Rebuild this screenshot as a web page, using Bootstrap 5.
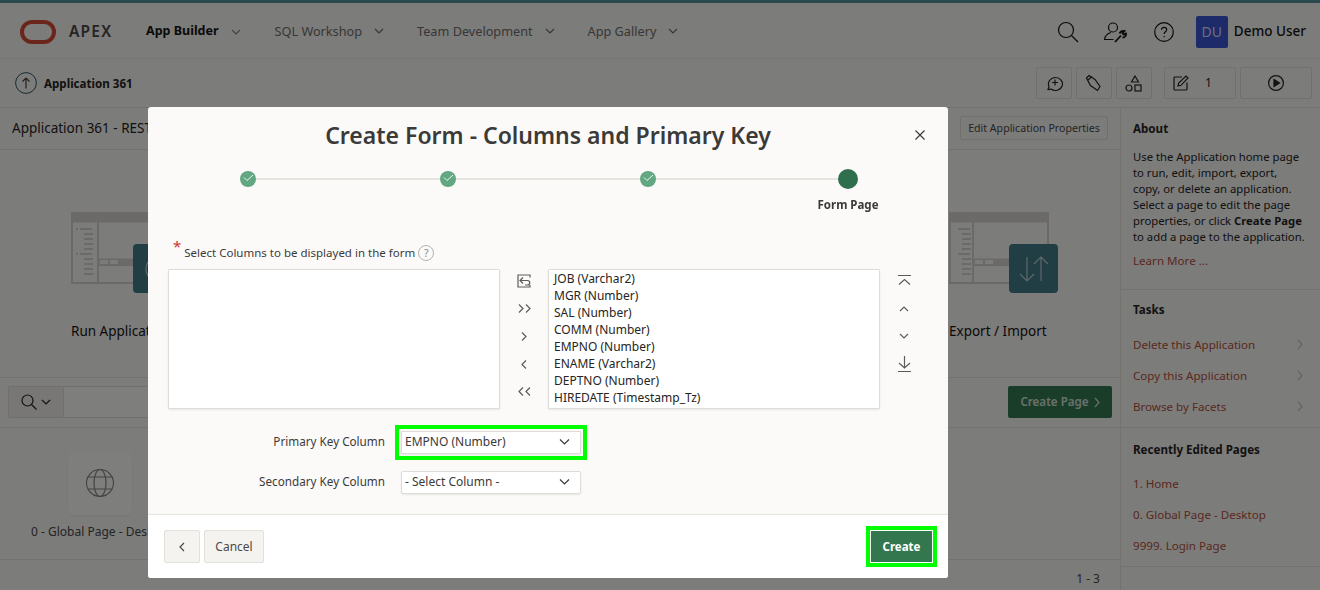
<!DOCTYPE html>
<html lang="en">
<head>
<meta charset="UTF-8" />
<title>Create Form - Columns and Primary Key</title>
<link rel="stylesheet" href="https://cdn.jsdelivr.net/npm/bootstrap@5.3.3/dist/css/bootstrap.min.css" />
<style>
  body { font-family: "Noto Sans", "Open Sans", sans-serif; font-size: 12px; color: #262523; background: #f9f8f6; height: 590px; overflow: hidden; }
  svg { display: block; fill: none; stroke: currentColor; stroke-width: 1.2; flex: none; }
  .top-strip { height: 3px; background: #54939f; }
  .head-bar { height: 56px; border-bottom: 1px solid #eceae6; padding: 2px 14px 0 20px; }
  .apex-word { font-size: 15.5px; font-weight: 600; letter-spacing: 1.2px; color: #4a4947; margin-left: 13px; width: 77px; }
  .top-link { font-size: 12.7px; color: #6f6e6b; margin-right: 33px; gap: 12px; }
  .top-link.on { font-size: 12.5px; color: #161513; font-weight: 700; margin-right: 34px; }
  .head-icons { color: #161513; }
  .du-box { width: 32px; height: 32px; background: #3d56d6; color: #d8dcf0; font-size: 14px; border-radius: 2px; margin-left: 22px; margin-right: 6px; }
  .du-name { font-size: 13.5px; font-weight: 500; color: #161513; }
  .sub-bar { height: 49px; border-bottom: 1px solid #e6e4df; padding-left: 15px; padding-right: 8px; }
  .sub-title { font-size: 11.6px; font-weight: 700; margin-left: 7px; margin-top: 1px; }
  .sq-btn { height: 32px; width: 36px; border: 1px solid #e2e0db; border-radius: 2px; color: #262523; margin-left: 4px; }
  .page-main { width: 1121px; border-right: 1px solid #e6e4df; height: 482px; }
  .title-row { height: 42px; border-bottom: 1px solid #e6e4df; padding: 0 12px; }
  .app-name { font-size: 13.5px; }
  .edit-btn { font-size: 10.6px; border: 1px solid #e2e0db; border-radius: 2px; color: #4a4947; width: 148px; height: 24px; line-height: 22px; text-align: center; white-space: nowrap; margin-top: -2px; }
  .hero-row { height: 228px; border-bottom: 1px solid #e6e4df; padding: 62px 62px 0 71px; }
  .hero-art { width: 100px; height: 72px; color: #d6d4d0; margin-bottom: 9px; }
  .hero-tile { width: 49px; height: 49px; background: #427d88; border-radius: 4px; color: #bcd0d4; }
  .hero-label { font-size: 13.5px; color: #161513; margin-top: 28px; }
  .search-row { height: 50px; border-bottom: 1px solid #e6e4df; padding: 8px; }
  .search-pick { width: 55px; height: 32px; border: 1px solid #e2e0db; border-right: 0; border-radius: 2px 0 0 2px; background: #f1efec; }
  .search-input { width: 700px; height: 32px; border: 1px solid #e2e0db; background: #fdfcfb; }
  .create-page { width: 104px; height: 32px; background: #347a54; color: #d5e2da; font-size: 11.6px; font-weight: 600; border-radius: 2px; gap: 5px; }
  .cards-row { height: 132px; border-bottom: 1px solid #e6e4df; padding: 23px 0 0 68px; }
  .page-card { width: 64px; height: 64px; background: #fdfcfb; border-radius: 6px; color: #8a8986; box-shadow: 0 1px 2px rgba(0,0,0,.06); }
  .card-cap { font-size: 12px; color: #4a4947; margin: 8px 0 0 -37px; }
  .pager-row { height: 30px; font-size: 12px; color: #4a4947; padding: 0 20px 2px 0; }
  .side-col { width: 199px; }
  .side-block { padding: 12px 12px 0; border-bottom: 1px solid #e6e4df; }
  .side-head { font-size: 11.6px; font-weight: 700; line-height: 18px; }
  .side-copy { font-size: 11.3px; line-height: 16px; margin-top: 11px; white-space: nowrap; }
  .side-link { font-size: 11.6px; color: #b3533c; height: 31px; padding-right: 5px; }
  .side-link svg { color: #c9c7c2; }
  .dlg-dialog { max-width: 800px; margin: 107px 0 0 148px; }
  .dlg-content { height: 471px; background: #fbfaf8; border: 0; border-radius: 3px; }
  .dlg-head { height: 57px; padding: 0; border: 0; justify-content: center; }
  .dlg-head .modal-title { font-size: 23px; font-weight: 600; color: #3b3a38; }
  .dlg-x { position: absolute; top: 23px; right: 23px; color: #3b3a38; }
  .step-track { height: 80px; padding-top: 5px; }
  .step-cell { width: 200px; position: relative; text-align: center; }
  .step-cell:not(:last-child)::after { content: ""; position: absolute; top: 9px; left: 100px; width: 200px; height: 2px; background: #e6e4df; }
  .step-dot { width: 16px; height: 16px; margin: 2px auto; border-radius: 50%; background: #62a682; color: #fff; position: relative; z-index: 1; padding-top: 2px; }
  .step-dot svg { stroke-width: .9; }
  .step-dot.now { width: 20px; height: 20px; margin: 0 auto; background: #2f6f4e; }
  .step-name { font-size: 11.5px; font-weight: 700; color: #3b3a38; margin-top: 7px; }
  .dlg-body { padding: 0 20px; }
  .req-label { font-size: 11.5px; color: #3b3a38; height: 25px; padding: 0 0 8px 5px; }
  .req-star { color: #d0342c; font-size: 15px; line-height: 1; margin: 0 3px 13px 0; }
  .help-dot { width: 16px; height: 16px; border: 1px solid #b5b3ae; border-radius: 50%; color: #8a8986; font-size: 10.5px; line-height: 14px; text-align: center; margin-left: 3px; }
  .shuttle-box { width: 332px; height: 140px; background: #fff; border: 1px solid #dedcd7; box-shadow: 0 1px 2px rgba(0,0,0,.08); border-radius: 1px; padding: 0 5px; }
  .shuttle-box div { font-size: 12px; line-height: 17px; color: #262523; }
  .shuttle-ctl { width: 48px; color: #5d5c59; margin-top: -2px; }
  .ctl-cell { height: 27.75px; }
  .key-row { height: 40px; }
  .key-label { width: 217px; text-align: right; font-size: 11.7px; color: #3b3a38; margin-right: 16px; }
  .key-pick { width: 180px; height: 23px; background: #fff; border: 1px solid #dedcd7; box-shadow: 0 1px 2px rgba(0,0,0,.08); border-radius: 2px; padding: 0 10px 0 3px; font-size: 12px; color: #3b3a38; }
  .green-mark { outline: 4px solid #00ff00; outline-offset: 2px; border-radius: 0; }
  .dlg-foot { height: 64px; background: #fff; border-top: 1px solid #e6e4df; padding: 0 16px; margin-top: auto; border-radius: 0 0 3px 3px; }
  .foot-btn { height: 33px; border: 1px solid #e2e0db; background: #f5f3f0; color: #4a4947; border-radius: 2px; font-size: 12px; }
  .foot-create { width: 61px; height: 31px; background: #33774f; color: #fff; font-size: 11.5px; font-weight: 700; outline: 4px solid #00ff00; outline-offset: 1px; margin-right: 0; }
  .modal-backdrop.dlg-shade { --bs-backdrop-opacity: .5; }
</style>
</head>
<body>
<header>
  <div class="top-strip"></div>
  <nav class="head-bar d-flex align-items-center">
    <svg width="36" height="24" viewBox="0 0 36 24" style="color:#d64a36"><rect x="2" y="2" width="32" height="20" rx="10" stroke-width="4"/></svg>
    <span class="apex-word">APEX</span>
    <span class="top-link on d-flex align-items-center">App Builder <svg width="10" height="6" viewBox="0 0 10 6" style="color:#8a8986"><path d="M1 1l4 4 4-4"/></svg></span>
    <span class="top-link d-flex align-items-center">SQL Workshop <svg width="10" height="6" viewBox="0 0 10 6"><path d="M1 1l4 4 4-4"/></svg></span>
    <span class="top-link d-flex align-items-center">Team Development <svg width="10" height="6" viewBox="0 0 10 6"><path d="M1 1l4 4 4-4"/></svg></span>
    <span class="top-link d-flex align-items-center">App Gallery <svg width="10" height="6" viewBox="0 0 10 6"><path d="M1 1l4 4 4-4"/></svg></span>
    <div class="head-icons ms-auto d-flex align-items-center">
      <svg width="22" height="22" viewBox="0 0 22 22" stroke-width="1.4"><circle cx="9" cy="9" r="7.5"/><path d="M14.5 14.5l6.5 6.5"/></svg>
      <svg class="ms-4" width="24" height="22" viewBox="0 0 24 22" stroke-width="1.3"><circle cx="10" cy="6.5" r="4.5"/><path d="M8 11.5C4 12.5 2 15 1.5 18.5h9"/><path d="M12 21l6-6.5M16.5 12.5c1-2 3-3 5-2.5l-2 2 1 1.5 2.500-1c.3 2-1 4-3.500 4" stroke-width="1.8"/></svg>
      <svg style="margin-left:27px" width="20" height="20" viewBox="0 0 20 20" stroke-width="1.2"><circle cx="10" cy="10" r="9.300"/><path d="M7.500 7.800c0-3.200 5.200-3.200 5.200 0 0 2-2.600 1.900-2.600 4.200"/><path d="M10.100 14v1.300"/></svg>
      <span class="du-box d-flex align-items-center justify-content-center">DU</span>
      <span class="du-name">Demo User</span>
    </div>
  </nav>
  <div class="sub-bar d-flex align-items-center">
    <svg width="22" height="22" viewBox="0 0 22 22" style="color:#2c5560"><circle cx="11" cy="11" r="10.400" stroke-width="1"/><path d="M11 16.500V6M7.500 9.500L11 6l3.500 3.500" stroke="#444"/></svg>
    <span class="sub-title">Application 361</span>
    <div class="ms-auto d-flex align-items-center">
      <span class="sq-btn d-flex align-items-center justify-content-center"><svg width="18" height="17" viewBox="0 0 18 17"><path d="M3 14.500l1-3A7 6.500 0 1 1 6 14c-1 .5-2 .6-3 .5z"/><path d="M10 4.500v6M7 7.500h6"/></svg></span>
      <span class="sq-btn d-flex align-items-center justify-content-center"><svg width="18" height="18" viewBox="0 0 18 18"><path d="M1.500 4L4 1.500l6 4 5 7-2.500 4-7-5z"/><path d="M3 6l4-3.500"/></svg></span>
      <span class="sq-btn d-flex align-items-center justify-content-center"><svg width="18" height="17" viewBox="0 0 18 17"><path d="M10 1l3.500 6h-7z"/><circle cx="4" cy="13" r="3"/><rect x="10" y="10" width="6" height="6"/></svg></span>
      <span class="sq-btn d-flex align-items-center" style="width:72px;margin-left:12px;padding-left:8px"><svg width="16" height="16" viewBox="0 0 16 16"><path d="M14 7.500V14a1 1 0 0 1-1 1H2a1 1 0 0 1-1-1V3a1 1 0 0 1 1-1h7"/><path d="M5 11l.7-3 7.300-7 2 2-7 7.300z"/></svg><span class="ms-3">1</span></span>
      <span class="sq-btn d-flex align-items-center justify-content-center" style="width:72px"><svg width="16" height="16" viewBox="0 0 16 16"><circle cx="8" cy="8" r="7.400"/><path d="M6 4.500L11.500 8 6 11.500z" fill="currentColor"/></svg></span>
    </div>
  </div>
</header>

<div class="d-flex">
  <main class="page-main">
    <div class="title-row d-flex align-items-center justify-content-between">
      <span class="app-name">Application 361 - REST</span>
      <span class="edit-btn">Edit Application Properties</span>
    </div>
    <div class="hero-row d-flex justify-content-between">
      <div>
        <div class="d-flex align-items-end">
          <svg class="hero-art" viewBox="0 0 100 72"><rect x="1" y="1" width="98" height="70" stroke-width="2"/><path d="M1 6h98" stroke-width="9"/><path d="M27 8v63M27 53h73" stroke-width="2"/><path d="M27 50h73" stroke-width="7"/><path d="M29 50h8M39 50h8" stroke="#f9f8f6" stroke-width="4"/><path d="M9 17h12M13 22h9M13 27h9M13 32h9M13 37h9M9 42h12M13 47h9M13 52h9M13 57h9M13 62h9" stroke-width="2"/><path d="M5 17h2M5 42h2" stroke-width="2"/></svg>
          <span class="hero-tile d-flex align-items-center justify-content-center" style="margin-left:-38px"><svg width="26" height="26" viewBox="0 0 26 26"><circle cx="13" cy="13" r="12"/><path d="M10 7.500L18.500 13 10 18.500z"/></svg></span>
        </div>
        <div class="hero-label">Run Application</div>
      </div>
      <div>
        <div class="d-flex align-items-end">
          <svg class="hero-art" viewBox="0 0 100 72"><rect x="1" y="1" width="98" height="70" stroke-width="2"/><path d="M1 6h98" stroke-width="9"/><path d="M24 8v63M24 53h76" stroke-width="2"/><path d="M24 50h76" stroke-width="7"/><path d="M26 50h8M36 50h8" stroke="#f9f8f6" stroke-width="4"/><path d="M9 17h12M13 22h9M13 27h9M13 32h9M13 37h9M9 42h12M13 47h9M13 52h9M13 57h9M13 62h9" stroke-width="2"/></svg>
          <span class="hero-tile d-flex align-items-center justify-content-center" style="margin-left:-40px"><svg width="30" height="26" viewBox="0 0 30 26" stroke-width="1.400"><path d="M8 1v24M1 18l7 7 7-7M22 25V1M15 8l7-7 7 7"/></svg></span>
        </div>
        <div class="hero-label">Export / Import</div>
      </div>
    </div>
    <div class="search-row d-flex">
      <span class="search-pick d-flex align-items-center justify-content-center gap-1"><svg width="16" height="16" viewBox="0 0 16 16"><circle cx="6.500" cy="6.500" r="5.500"/><path d="M10.500 10.500l5 5"/></svg><svg width="10" height="6" viewBox="0 0 10 6"><path d="M1 1l4 4 4-4"/></svg></span>
      <span class="search-input"></span>
      <span class="create-page d-flex align-items-center justify-content-center ms-auto">Create Page <svg width="6" height="11" viewBox="0 0 6 11"><path d="M1 1l4 4.500-4 4.500"/></svg></span>
    </div>
    <div class="cards-row">
      <div class="page-card d-flex align-items-center justify-content-center"><svg width="28" height="28" viewBox="0 0 28 28" stroke-width="1"><circle cx="14" cy="14" r="13.500"/><ellipse cx="14" cy="14" rx="6" ry="13.500"/><path d="M2 8h24M2 20h24"/></svg></div>
      <div class="card-cap">0 - Global Page - Desktop</div>
    </div>
    <div class="pager-row d-flex align-items-end justify-content-end">1 - 3</div>
  </main>

  <aside class="side-col">
    <div class="side-block" style="height:182px">
      <div class="side-head">About</div>
      <p class="side-copy mb-0">Use the Application home page<br />to run, edit, import, export,<br />copy, or delete an application.<br />Select a page to edit the page<br />properties, or click <b>Create Page</b><br />to add a page to the application.</p>
      <div class="side-link" style="margin-top:7px;height:auto">Learn More ...</div>
    </div>
    <div class="side-block" style="height:138px;padding-top:11px">
      <div class="side-head mb-2">Tasks</div>
      <div class="side-link d-flex align-items-center justify-content-between" style="margin-top:10px">Delete this Application <svg width="6" height="11" viewBox="0 0 6 11"><path d="M1 1l4 4.500-4 4.500"/></svg></div>
      <div class="side-link d-flex align-items-center justify-content-between">Copy this Application <svg width="6" height="11" viewBox="0 0 6 11"><path d="M1 1l4 4.500-4 4.500"/></svg></div>
      <div class="side-link d-flex align-items-center justify-content-between">Browse by Facets <svg width="6" height="11" viewBox="0 0 6 11"><path d="M1 1l4 4.500-4 4.500"/></svg></div>
    </div>
    <div class="side-block" style="height:139px;padding-top:13px">
      <div class="side-head mb-2">Recently Edited Pages</div>
      <div class="side-link d-flex align-items-center" style="margin-top:9px">1. Home</div>
      <div class="side-link d-flex align-items-center">0. Global Page - Desktop</div>
      <div class="side-link d-flex align-items-center">9999. Login Page</div>
    </div>
  </aside>
</div>

<div class="modal-backdrop dlg-shade show"></div>
<div class="modal d-block">
  <div class="modal-dialog dlg-dialog">
    <div class="modal-content dlg-content">
      <div class="modal-header dlg-head">
        <h1 class="modal-title">Create Form - Columns and Primary Key</h1>
        <svg class="dlg-x" width="10" height="10" viewBox="0 0 10 10" stroke-width="1"><path d="M.5.500l9 9M9.500.500l-9 9"/></svg>
      </div>
      <div class="step-track d-flex">
        <div class="step-cell"><div class="step-dot d-flex justify-content-center"><svg width="11" height="8" viewBox="0 0 11 8"><path d="M1 4.500L4 7.500 10 2"/></svg></div></div>
        <div class="step-cell"><div class="step-dot d-flex justify-content-center"><svg width="11" height="8" viewBox="0 0 11 8"><path d="M1 4.500L4 7.500 10 2"/></svg></div></div>
        <div class="step-cell"><div class="step-dot d-flex justify-content-center"><svg width="11" height="8" viewBox="0 0 11 8"><path d="M1 4.500L4 7.500 10 2"/></svg></div></div>
        <div class="step-cell"><div class="step-dot now"></div><div class="step-name">Form Page</div></div>
      </div>
      <div class="dlg-body">
        <div class="req-label d-flex align-items-center"><span class="req-star">*</span><span>Select Columns to be displayed in the form</span><span class="help-dot">?</span></div>
        <div class="d-flex">
          <div class="shuttle-box"></div>
          <div class="shuttle-ctl">
            <div class="ctl-cell d-flex align-items-center justify-content-center"><svg width="14" height="14" viewBox="0 0 14 14" stroke-width="1"><path d="M13 3.500V1H1v12h12v-2"/><path d="M6 3.500L3 6.500l3 3M3 6.500h7.500a2.200 2.200 0 0 1 0 4.500H8"/></svg></div>
            <div class="ctl-cell d-flex align-items-center justify-content-center"><svg width="13" height="9" viewBox="0 0 13 9"><path d="M1 .5l4 4-4 4M8 .5l4 4-4 4"/></svg></div>
            <div class="ctl-cell d-flex align-items-center justify-content-center"><svg width="6" height="9" viewBox="0 0 6 9"><path d="M1 .5l4 4-4 4"/></svg></div>
            <div class="ctl-cell d-flex align-items-center justify-content-center"><svg width="6" height="9" viewBox="0 0 6 9"><path d="M5 .5l-4 4 4 4"/></svg></div>
            <div class="ctl-cell d-flex align-items-center justify-content-center"><svg width="13" height="9" viewBox="0 0 13 9"><path d="M5 .5l-4 4 4 4M12 .5l-4 4 4 4"/></svg></div>
          </div>
          <div class="shuttle-box">
            <div>JOB (Varchar2)</div>
            <div>MGR (Number)</div>
            <div>SAL (Number)</div>
            <div>COMM (Number)</div>
            <div>EMPNO (Number)</div>
            <div>ENAME (Varchar2)</div>
            <div>DEPTNO (Number)</div>
            <div>HIREDATE (Timestamp_Tz)</div>
          </div>
          <div class="shuttle-ctl">
            <div class="ctl-cell d-flex align-items-center justify-content-center"><svg width="13" height="11" viewBox="0 0 13 11"><path d="M0 .5h13M1 9.500l5.500-5 5.500 5"/></svg></div>
            <div class="ctl-cell d-flex align-items-center justify-content-center"><svg width="10" height="6" viewBox="0 0 10 6"><path d="M1 5l4-4 4 4"/></svg></div>
            <div class="ctl-cell d-flex align-items-center justify-content-center"><svg width="10" height="6" viewBox="0 0 10 6"><path d="M1 1l4 4 4-4"/></svg></div>
            <div class="ctl-cell d-flex align-items-center justify-content-center"><svg width="13" height="16" viewBox="0 0 13 16"><path d="M6.500 0v12M1 7l5.500 5L12 7M0 15.500h13"/></svg></div>
          </div>
        </div>
        <div class="key-row d-flex align-items-center" style="margin-top:13px">
          <span class="key-label">Primary Key Column</span>
          <span class="key-pick green-mark d-flex align-items-center justify-content-between">EMPNO (Number) <svg width="11" height="6" viewBox="0 0 11 6"><path d="M1 .5l4.500 4.500L10 .5"/></svg></span>
        </div>
        <div class="key-row d-flex align-items-center">
          <span class="key-label">Secondary Key Column</span>
          <span class="key-pick d-flex align-items-center justify-content-between">- Select Column - <svg width="11" height="6" viewBox="0 0 11 6"><path d="M1 .5l4.500 4.500L10 .5"/></svg></span>
        </div>
      </div>
      <div class="dlg-foot d-flex align-items-center">
        <span class="foot-btn d-flex align-items-center justify-content-center" style="width:36px"><svg width="6" height="10" viewBox="0 0 6 10"><path d="M5 1L1 5l4 4"/></svg></span>
        <span class="foot-btn d-flex align-items-center justify-content-center ms-1" style="width:60px">Cancel</span>
        <span class="foot-create d-flex align-items-center justify-content-center ms-auto">Create</span>
      </div>
    </div>
  </div>
</div>
<script src="https://cdn.jsdelivr.net/npm/bootstrap@5.3.3/dist/js/bootstrap.bundle.min.js"></script>
</body>
</html>
